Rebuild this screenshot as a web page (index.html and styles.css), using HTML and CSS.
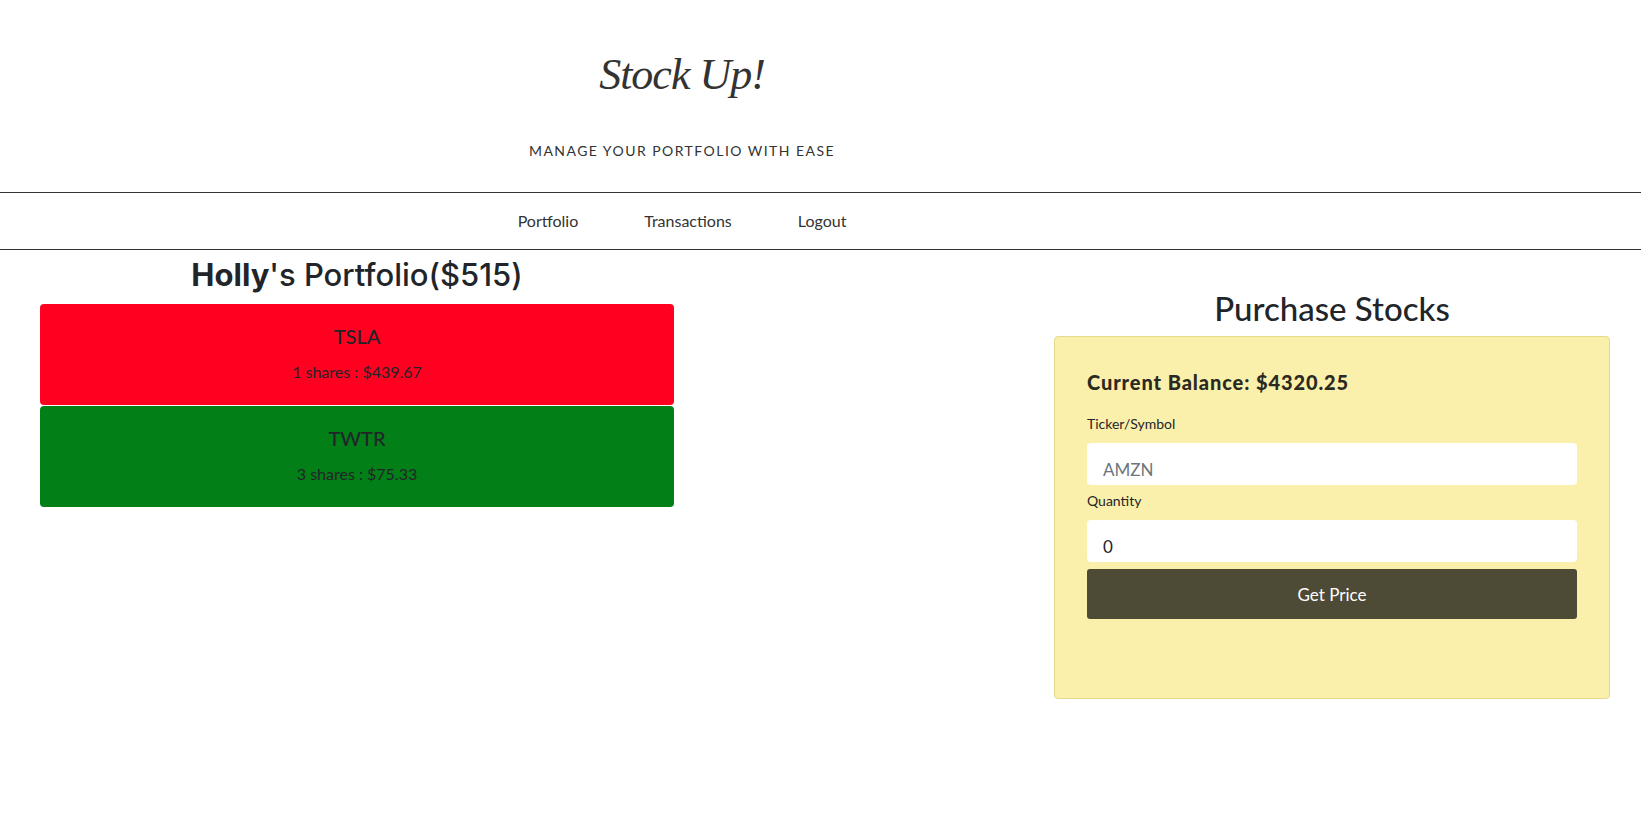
FILE: index.html
```html
<!DOCTYPE html>
<html lang="en">
<head>
<meta charset="utf-8">
<title>Stock Up!</title>
<link rel="stylesheet" href="styles.css">
</head>
<body>
<header class="masthead">
  <div class="masthead-inner">
    <h1 class="brand">Stock Up!</h1>
    <p class="tagline">MANAGE YOUR PORTFOLIO WITH EASE</p>
  </div>
</header>
<nav class="topnav">
  <ul class="topnav-list">
    <li><a href="#">Portfolio</a></li>
    <li><a href="#">Transactions</a></li>
    <li><a href="#">Logout</a></li>
  </ul>
</nav>
<main class="page">
  <section class="portfolio">
    <h2 class="portfolio-title"><b>Holly</b>'s Portfolio($515)</h2>
    <div class="stock stock-down">
      <h5 class="stock-symbol">TSLA</h5>
      <p class="stock-detail">1 shares : $439.67</p>
    </div>
    <div class="stock stock-up">
      <h5 class="stock-symbol">TWTR</h5>
      <p class="stock-detail">3 shares : $75.33</p>
    </div>
  </section>
  <div class="spacer"></div>
  <section class="purchase">
    <h2 class="purchase-title">Purchase Stocks</h2>
    <form class="purchase-panel">
      <h4 class="balance">Current Balance: $4320.25</h4>
      <label class="field-label" for="ticker">Ticker/Symbol</label>
      <input class="field-input" id="ticker" type="text" placeholder="AMZN">
      <label class="field-label field-label-tight" for="qty">Quantity</label>
      <input class="field-input field-value" id="qty" type="text" value="0">
      <button class="price-btn" type="button">Get Price</button>
    </form>
  </section>
</main>
</body>
</html>
```

FILE: styles.css
```css
* { box-sizing: border-box; }

body {
  margin: 0;
  font-family: Lato, "Open Sans", sans-serif;
  color: #212529;
  background: #fff;
}

.masthead-inner {
  width: 1364px;
  text-align: center;
  padding-top: 53px;
  height: 192px;
}

.brand {
  margin: 0;
  font-family: "Liberation Serif", "DejaVu Serif", serif;
  font-style: italic;
  font-weight: normal;
  font-size: 44px;
  line-height: 44px;
  letter-spacing: -1px;
  color: #333;
}

.tagline {
  margin: 44px 0 0;
  font-size: 14px;
  line-height: 20px;
  letter-spacing: 1.45px;
  color: #333;
}

.topnav {
  border-top: 1px solid #333;
  border-bottom: 1px solid #333;
}

.topnav-list {
  list-style: none;
  margin: 0;
  padding: 0;
  width: 1364px;
  display: flex;
  justify-content: center;
  gap: 66px;
  height: 56px;
  align-items: center;
}

.topnav-list a {
  font-size: 16px;
  line-height: 54px;
  color: #333;
  text-decoration: none;
  display: block;
}

.page {
  display: grid;
  grid-template-columns: 634px 1fr 556px;
  padding: 0 31px 0 40px;
}

.portfolio { text-align: center; }

.portfolio-title {
  margin: 7px 0 11px;
  font-family: Inter, "Liberation Sans", sans-serif;
  font-weight: 500;
  font-size: 31px;
  line-height: 36px;
  color: #212529;
}

.portfolio-title b { font-weight: 700; }

.stock {
  height: 101px;
  border-radius: 4px;
  padding-top: 20px;
  margin-bottom: 1px;
}

.stock-down { background: #ff0020; }
.stock-up { background: #027f17; }

.stock-symbol {
  margin: 0;
  font-size: 20px;
  font-weight: 500;
  line-height: 24px;
}

.stock-detail {
  margin: 12px 0 0;
  font-size: 16px;
  line-height: 24px;
}

.purchase { text-align: center; }

.purchase-title {
  margin: 39px 0 9px;
  font-size: 33px;
  font-weight: 500;
  line-height: 38px;
}

.purchase-panel {
  text-align: left;
  height: 363px;
  background: #fbf0ab;
  border: 1px solid #e8da8c;
  border-radius: 4px;
  padding: 33px 32px 0;
  display: flex;
  flex-direction: column;
}

.balance {
  margin: 0;
  font-size: 20px;
  font-weight: 900;
  line-height: 25px;
  letter-spacing: 0.9px;
  color: #2a2a22;
}

.field-label {
  margin-top: 19px;
  font-size: 14px;
  line-height: 20px;
}

.field-label-tight { margin-top: 6px; }

.field-input {
  margin-top: 9px;
  height: 42px;
  border: 0;
  border-radius: 4px;
  background: #fff;
  padding: 10px 16px 0;
  font-family: Lato, sans-serif;
  font-size: 17px;
  color: #212529;
  outline: none;
}

.field-input::placeholder { color: #6c757d; }

.price-btn {
  margin-top: 7px;
  height: 50px;
  border: 0;
  border-radius: 3px;
  background: #4d4a36;
  color: #fff;
  font-family: Lato, sans-serif;
  font-size: 17px;
}
```
